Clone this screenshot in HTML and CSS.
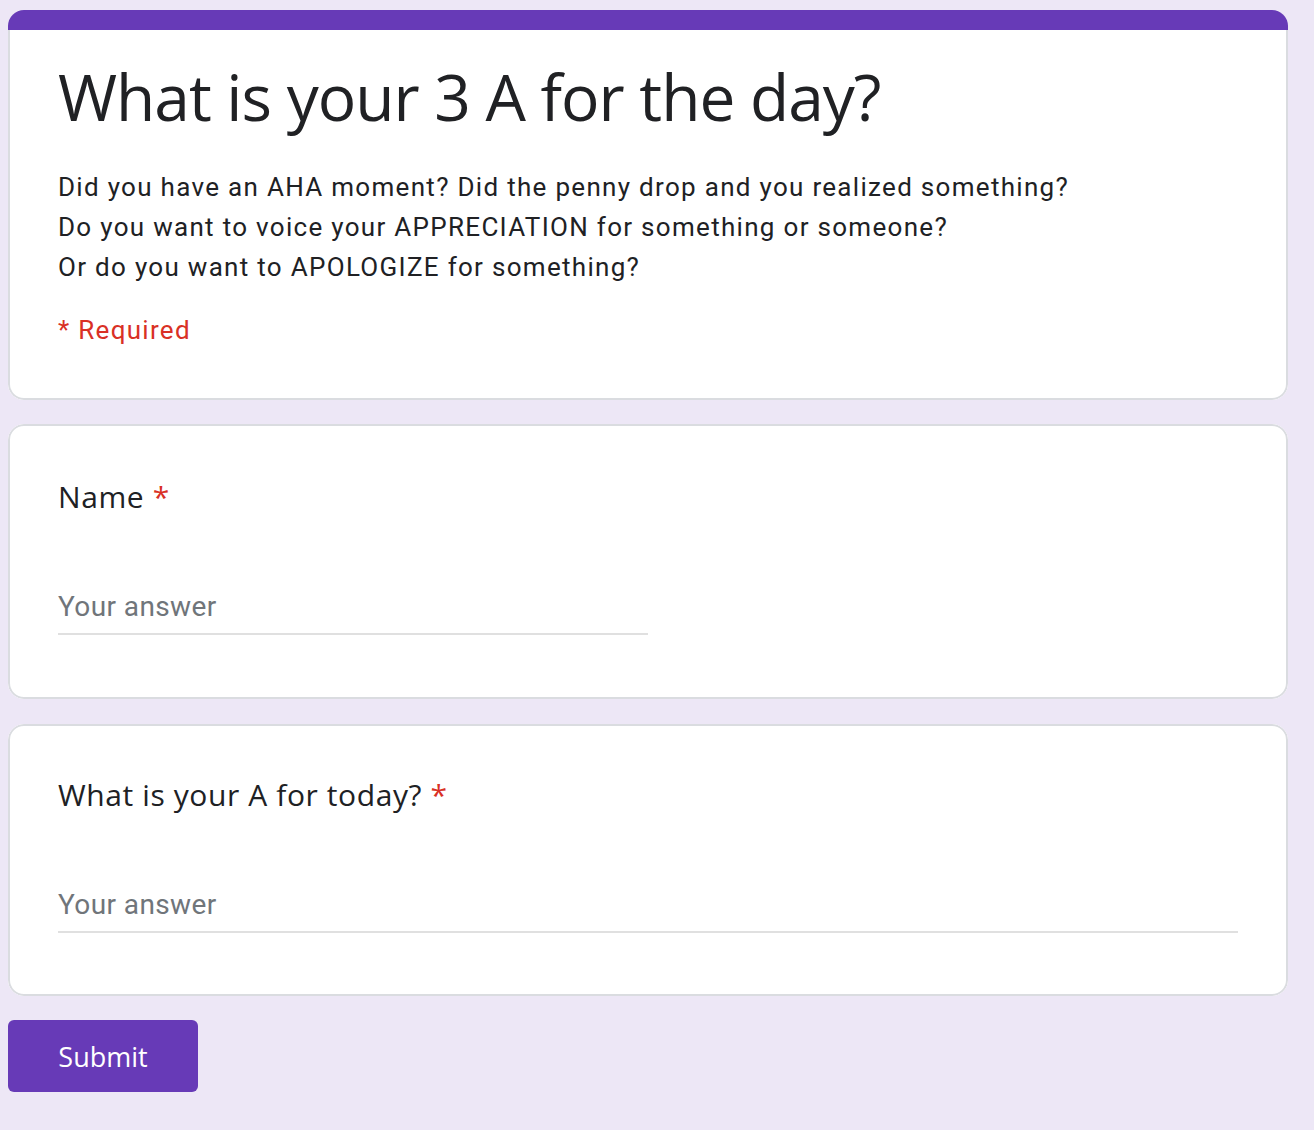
FILE: index.html
```html
<!DOCTYPE html>
<html lang="en">
<head>
<meta charset="utf-8">
<title>What is your 3 A for the day?</title>
<link rel="stylesheet" href="styles.css">
</head>
<body>
<main class="form">
  <section class="card card-header">
    <div class="accent"></div>
    <div class="card-body header-body">
      <h1 class="title">What is your 3 A for the day?</h1>
      <p class="desc">Did you have an AHA moment? Did the penny drop and you realized something?<br>Do you want to voice your APPRECIATION for something or someone?<br>Or do you want to APOLOGIZE for something?</p>
      <p class="required-note">* Required</p>
    </div>
  </section>

  <section class="card card-name">
    <div class="card-body question">
      <div class="q-title">Name <span class="star">*</span></div>
      <div class="input input-half"><span class="placeholder">Your answer</span></div>
    </div>
  </section>

  <section class="card card-last">
    <div class="card-body question">
      <div class="q-title">What is your A for today? <span class="star">*</span></div>
      <div class="input input-full"><span class="placeholder">Your answer</span></div>
    </div>
  </section>

  <div class="actions">
    <button class="submit" type="button">Submit</button>
  </div>
</main>
</body>
</html>
```

FILE: styles.css
```css
* { box-sizing: border-box; }
html, body { margin: 0; padding: 0; }
body {
  background: #ede7f6;
  font-family: Roboto, "Noto Sans", sans-serif;
  color: #202124;
  width: 1314px;
  min-height: 1130px;
}
.form {
  width: 1280px;
  margin-left: 8px;
  padding-top: 10px;
  display: flex;
  flex-direction: column;
}
.card {
  background: #fff;
  border-radius: 16px;
  margin-bottom: 25px;
  overflow: hidden;
}
.card-header { margin-bottom: 24px; }
.card-last { margin-bottom: 24px; }
.accent {
  height: 20px;
  background: #673ab7;
}
.card-body {
  border: 2px solid #dadce0;
  border-radius: 16px;
}
.header-body {
  border-top: none;
  border-radius: 0 0 16px 16px;
  padding: 27px 48px 48px 48px;
}
.title {
  margin: 0 0 30px;
  font-family: "Open Sans", sans-serif;
  font-weight: 400;
  font-size: 64px;
  line-height: 80px;
  letter-spacing: -1px;
  color: #202124;
}
.desc {
  margin: 0;
  font-size: 26px;
  line-height: 40px;
  letter-spacing: 1.3px;
  color: #202124;
}
.required-note {
  margin: 23px 0 0;
  font-size: 26px;
  line-height: 40px;
  letter-spacing: 1.3px;
  color: #d93025;
}
.question {
  padding: 45px 48px 61px 48px;
}
.card-name .question {
  padding-top: 47px;
  padding-bottom: 62px;
}
.q-title {
  font-family: "Open Sans", sans-serif;
  font-size: 30px;
  line-height: 48px;
  letter-spacing: 0.6px;
  color: #202124;
}
.star { color: #d93025; }
.input {
  margin-top: 66px;
  padding-bottom: 6px;
  border-bottom: 2px solid #e0e0e0;
}
.input-half { width: 590px; }
.input-full { width: 100%; }
.placeholder {
  display: block;
  font-size: 28px;
  line-height: 40px;
  letter-spacing: 0.4px;
  color: #70757a;
}
.actions { display: flex; }
.submit {
  width: 190px;
  height: 72px;
  border: none;
  border-radius: 6px;
  background: #673ab7;
  color: #fff;
  font-family: "Open Sans", sans-serif;
  font-weight: 500;
  font-size: 27px;
  padding: 0;
}
```
